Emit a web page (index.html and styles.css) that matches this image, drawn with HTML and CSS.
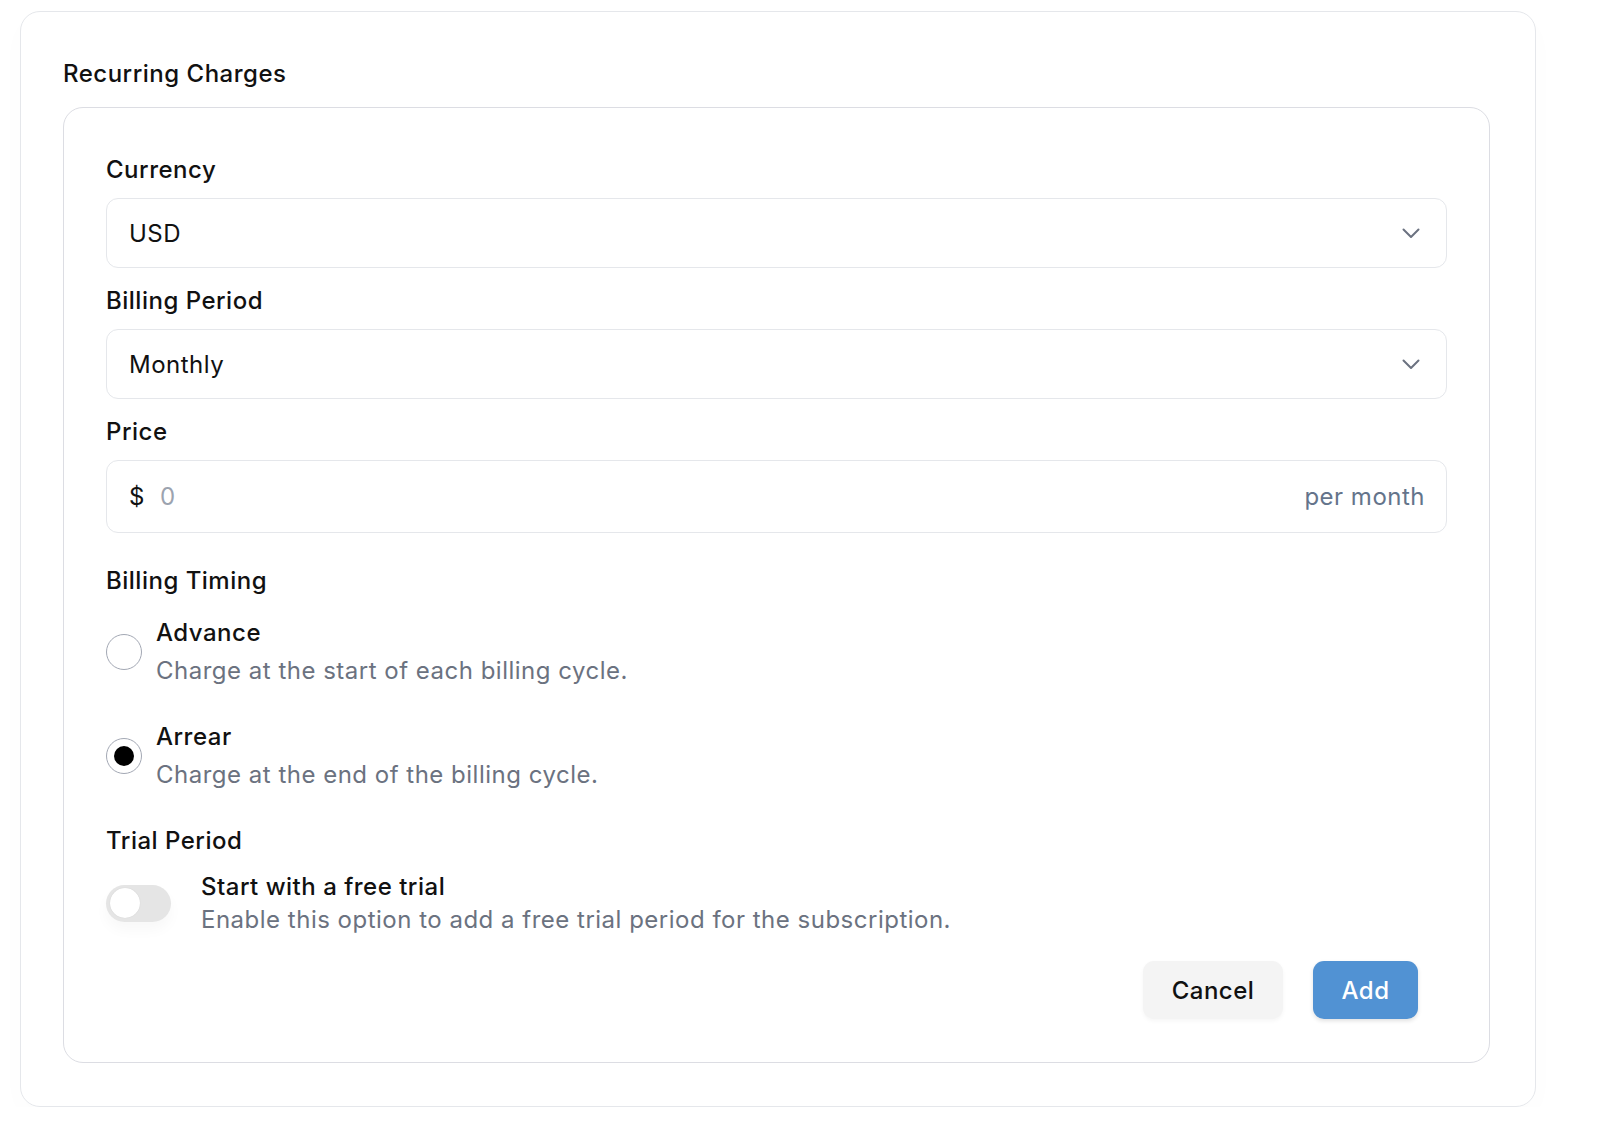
FILE: index.html
```html
<!DOCTYPE html>
<html>
<head>
<meta charset="utf-8">
<link rel="stylesheet" href="styles.css">
</head>
<body>
<div class="outer">
  <h2 class="title">Recurring Charges</h2>
  <div class="inner">
    <div class="field">
      <label class="label">Currency</label>
      <div class="select">
        <span>USD</span>
        <svg class="chev" width="18" height="11" viewBox="0 0 18 11"><path d="M1.5 1.5 L9 9 L16.5 1.5" fill="none" stroke="#6b7280" stroke-width="2" stroke-linecap="round" stroke-linejoin="round"/></svg>
      </div>
    </div>
    <div class="field">
      <label class="label">Billing Period</label>
      <div class="select">
        <span>Monthly</span>
        <svg class="chev" width="18" height="11" viewBox="0 0 18 11"><path d="M1.5 1.5 L9 9 L16.5 1.5" fill="none" stroke="#6b7280" stroke-width="2" stroke-linecap="round" stroke-linejoin="round"/></svg>
      </div>
    </div>
    <div class="field">
      <label class="label">Price</label>
      <div class="select price">
        <span class="cur">$</span>
        <span class="ph">0</span>
        <span class="suffix">per month</span>
      </div>
    </div>

    <div class="section">
      <div class="label">Billing Timing</div>
      <div class="radio-row">
        <span class="radio"></span>
        <div class="rtext">
          <div class="rtitle">Advance</div>
          <div class="rdesc">Charge at the start of each billing cycle.</div>
        </div>
      </div>
      <div class="radio-row">
        <span class="radio checked"></span>
        <div class="rtext">
          <div class="rtitle">Arrear</div>
          <div class="rdesc">Charge at the end of the billing cycle.</div>
        </div>
      </div>
    </div>

    <div class="section trial">
      <div class="label">Trial Period</div>
      <div class="toggle-row">
        <span class="toggle"><span class="knob"></span></span>
        <div class="ttext">
          <div class="ttitle">Start with a free trial</div>
          <div class="tdesc">Enable this option to add a free trial period for the subscription.</div>
        </div>
      </div>
    </div>

    <div class="actions">
      <button class="btn cancel">Cancel</button>
      <button class="btn add">Add</button>
    </div>
  </div>
</div>
</body>
</html>
```
FILE: styles.css
```css
html, body {
  margin: 0;
  padding: 0;
  background: #ffffff;
}
body {
  font-family: Inter, "Noto Sans", sans-serif;
  color: #111111;
  padding: 11px 0 0 20px;
  letter-spacing: 0.5px;
}
.outer {
  width: 1427px;
  border: 1px solid #e5e7eb;
  border-radius: 20px;
  padding: 44px 45px 43px 42px;
  box-shadow: 0 10px 30px rgba(0, 0, 0, 0.015);
}
.title {
  margin: 0 0 15px 0;
  font-size: 24px;
  line-height: 36px;
  font-weight: 500;
  color: #111;
}
.inner {
  border: 1px solid #dcdde3;
  border-radius: 20px;
  padding: 44px 42px 43px 42px;
}
.field {
  margin-bottom: 15px;
}
.label {
  display: block;
  font-size: 24px;
  line-height: 36px;
  font-weight: 500;
  color: #111;
  margin-bottom: 10px;
}
.select {
  height: 68px;
  border: 1px solid #e5e7eb;
  border-radius: 12px;
  display: flex;
  align-items: center;
  padding: 0 26px 0 22px;
  font-size: 24px;
  color: #111;
  justify-content: space-between;
}
.select.price {
  height: 71px;
  justify-content: flex-start;
  padding-right: 21px;
}
.cur {
  color: #111;
}
.ph {
  color: #9ca3af;
  margin-left: 15px;
}
.suffix {
  margin-left: auto;
  color: #64748b;
}
.chev {
  display: block;
}
.section {
  margin-top: 30px;
}
.section .label {
  margin-bottom: 16px;
}
.radio-row {
  display: flex;
  align-items: center;
  margin-bottom: 30px;
}
.radio-row:last-child {
  margin-bottom: 0;
}
.radio {
  border: 1px solid #a3a8b4;
  border-radius: 50%;
  box-sizing: border-box;
  width: 36px;
  height: 36px;
  margin-right: 14px;
  flex: none;
  position: relative;
  background: #fff;
}
.radio.checked::after {
  content: "";
  position: absolute;
  left: 7px;
  top: 7px;
  width: 20px;
  height: 20px;
  border-radius: 50%;
  background: #000;
}
.rtitle {
  font-size: 24px;
  line-height: 36px;
  font-weight: 500;
  color: #111;
}
.rdesc {
  font-size: 24px;
  line-height: 36px;
  color: #6b7280;
  margin-top: 2px;
}
.trial .label {
  margin-bottom: 11px;
}
.toggle-row {
  display: flex;
  align-items: center;
}
.toggle {
  width: 65px;
  height: 37px;
  border-radius: 19px;
  background: #e5e5e5;
  flex: none;
  margin-right: 30px;
  position: relative;
  box-shadow: 0 8px 14px rgba(0, 0, 0, 0.03);
}
.knob {
  position: absolute;
  left: 4px;
  top: 3px;
  width: 30px;
  height: 30px;
  border-radius: 50%;
  background: #fff;
  box-shadow: 0 0 1px rgba(0, 0, 0, 0.15);
}
.ttitle {
  font-size: 24px;
  line-height: 33px;
  font-weight: 500;
  color: #111;
}
.tdesc {
  font-size: 24px;
  line-height: 33px;
  color: #6b7280;
}
.actions {
  display: flex;
  justify-content: flex-end;
  gap: 30px;
  margin-top: 25px;
  padding-right: 29px;
}
.btn {
  height: 58px;
  border: none;
  border-radius: 11px;
  font-family: Inter, "Noto Sans", sans-serif;
  font-size: 24px;
  font-weight: 500;
  letter-spacing: 0.5px;
  padding: 0;
  cursor: pointer;
}
.cancel {
  background: #f4f4f4;
  color: #111;
  width: 140px;
  box-shadow: 0 2px 4px rgba(0, 0, 0, 0.04);
}
.add {
  background: #5192d3;
  color: #fff;
  width: 105px;
  box-shadow: 0 2px 4px rgba(0, 0, 0, 0.12);
}
```
